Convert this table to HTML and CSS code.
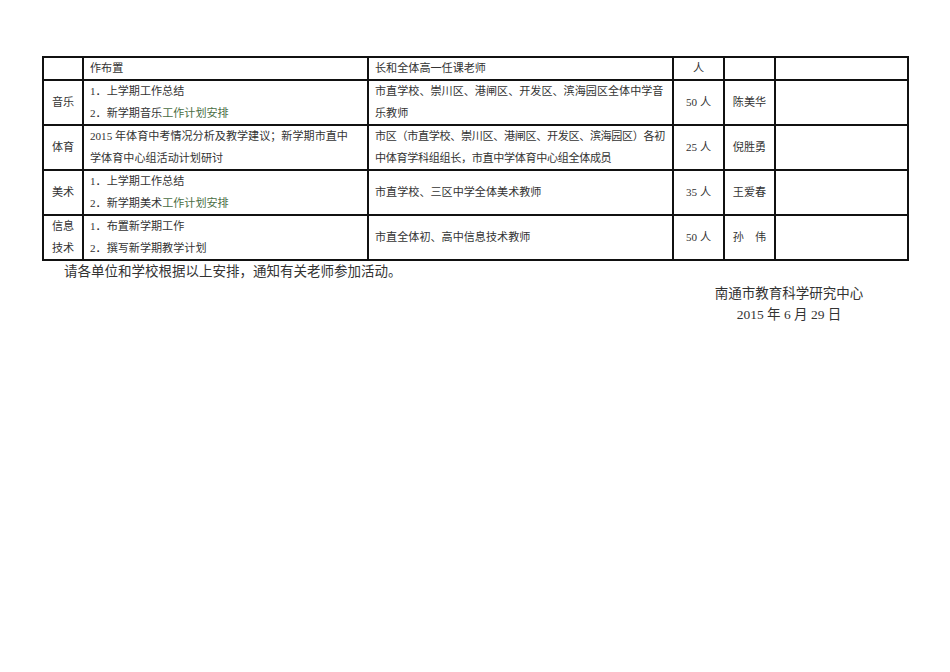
FILE: index.html
```html
<!DOCTYPE html>
<html lang="zh-CN">
<head>
<meta charset="utf-8">
<title>活动安排</title>
<link rel="stylesheet" href="styles.css">
</head>
<body>
<div class="page">
  <table class="plan">
    <colgroup>
      <col class="c1"><col class="c2"><col class="c3"><col class="c4"><col class="c5"><col class="c6">
    </colgroup>
    <tr class="head">
      <td></td>
      <td>作布置</td>
      <td>长和全体高一任课老师</td>
      <td class="ctr">人</td>
      <td></td>
      <td></td>
    </tr>
    <tr>
      <td class="ctr">音乐</td>
      <td>1．上学期工作总结<br>2．新学期音乐<span class="g">工作计划安排</span></td>
      <td>市直学校、崇川区、港闸区、开发区、滨海园区全体中学音<br>乐教师</td>
      <td class="ctr">50 人</td>
      <td class="ctr">陈美华</td>
      <td></td>
    </tr>
    <tr>
      <td class="ctr">体育</td>
      <td>2015 年体育中考情况分析及教学建议；新学期市直中<br>学体育中心组活动计划研讨</td>
      <td class="tight">市区（市直学校、崇川区、港闸区、开发区、滨海园区）各初<br>中体育学科组组长，市直中学体育中心组全体成员</td>
      <td class="ctr">25 人</td>
      <td class="ctr">倪胜勇</td>
      <td></td>
    </tr>
    <tr>
      <td class="ctr">美术</td>
      <td>1．上学期工作总结<br>2．新学期美术<span class="g">工作计划安排</span></td>
      <td>市直学校、三区中学全体美术教师</td>
      <td class="ctr">35 人</td>
      <td class="ctr">王爱春</td>
      <td></td>
    </tr>
    <tr>
      <td class="ctr">信息<br>技术</td>
      <td>1．布置新学期工作<br>2．撰写新学期教学计划</td>
      <td>市直全体初、高中信息技术教师</td>
      <td class="ctr">50 人</td>
      <td class="ctr">孙　伟</td>
      <td></td>
    </tr>
  </table>
  <p class="note">请各单位和学校根据以上安排，通知有关老师参加活动。</p>
  <div class="sign">
    <div>南通市教育科学研究中心</div>
    <div>2015 年 6 月 29 日</div>
  </div>
</div>
</body>
</html>
```
FILE: styles.css
```css
html, body {
  margin: 0;
  padding: 0;
  background: #fff;
}
body {
  width: 950px;
  height: 672px;
  font-family: "Liberation Serif", "Noto Sans CJK SC", serif;
  color: #333;
}
.page {
  padding: 56px 0 0 42px;
}
.plan {
  border-collapse: collapse;
  table-layout: fixed;
  width: 865px;
  font-size: 11.1px;
  line-height: 21.5px;
}
.plan td {
  border: 2px solid #111;
  padding: 0 0 0 6px;
  vertical-align: middle;
  white-space: nowrap;
  overflow: hidden;
}
.plan td.ctr {
  text-align: center;
  padding: 0;
}
.plan td.tight {
  letter-spacing: -0.35px;
}
.c1 { width: 40px; }
.c2 { width: 285px; }
.c3 { width: 305px; }
.c4 { width: 51px; }
.c5 { width: 51px; }
.c6 { width: 133px; }
.plan tr.head td {
  height: 21px;
  line-height: 21px;
}
.g {
  color: #4a6e44;
}
.note {
  margin: 0;
  padding-left: 22px;
  font-size: 13.5px;
  line-height: 22px;
}
.sign {
  width: 170px;
  margin-left: 662px;
  text-align: center;
  font-size: 13.5px;
  line-height: 21px;
}
```
